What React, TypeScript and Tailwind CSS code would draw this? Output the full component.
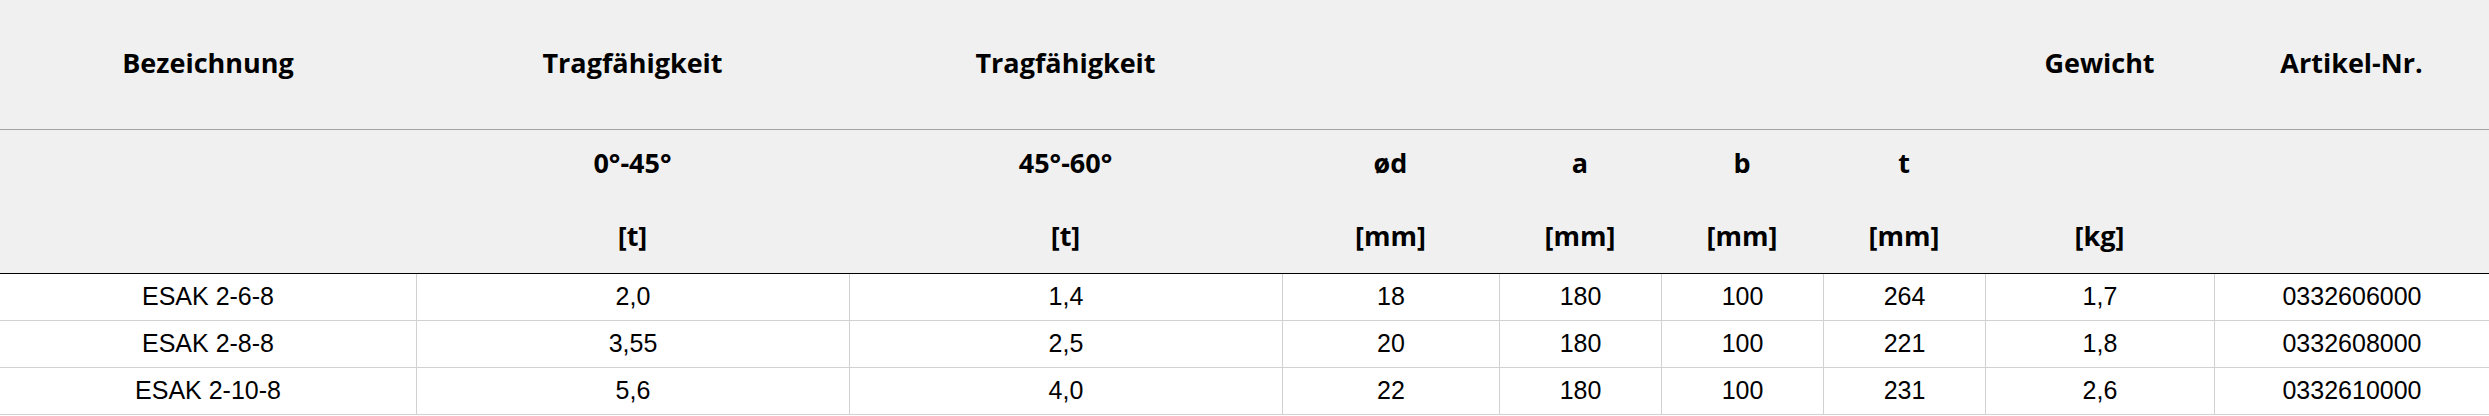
type Row = {
  name: string
  t45: string
  t60: string
  d: string
  a: string
  b: string
  t: string
  kg: string
  nr: string
}

const rows: Row[] = [
  { name: "ESAK 2-6-8", t45: "2,0", t60: "1,4", d: "18", a: "180", b: "100", t: "264", kg: "1,7", nr: "0332606000" },
  { name: "ESAK 2-8-8", t45: "3,55", t60: "2,5", d: "20", a: "180", b: "100", t: "221", kg: "1,8", nr: "0332608000" },
  { name: "ESAK 2-10-8", t45: "5,6", t60: "4,0", d: "22", a: "180", b: "100", t: "231", kg: "2,6", nr: "0332610000" },
]

// column widths taken from the original table
const grid = "grid grid-cols-[416px_433px_433px_217px_162px_162px_162px_229px_275px]"

const top = ["Bezeichnung", "Tragfähigkeit", "Tragfähigkeit", "", "", "", "", "Gewicht", "Artikel-Nr."]

const sub: [string, string][] = [
  ["", ""],
  ["0°-45°", "[t]"],
  ["45°-60°", "[t]"],
  ["ød", "[mm]"],
  ["a", "[mm]"],
  ["b", "[mm]"],
  ["t", "[mm]"],
  ["", "[kg]"],
  ["", ""],
]

export default function App() {
  return (
    <div className="w-[2489px] h-[416px] bg-white text-black">
      <div className="bg-[#f0f0f0] font-['Open_Sans',sans-serif] font-bold text-[27px]">
        <div className={`${grid} h-[130px] border-b border-[#a3a3a3]`}>
          {top.map((label, i) => (
            <div key={i} className="flex items-center justify-center pb-[2px]">
              {label}
            </div>
          ))}
        </div>
        <div className={`${grid} h-[144px] border-b border-black`}>
          {sub.map(([first, second], i) => (
            <div key={i} className="flex flex-col items-center pt-[15px] gap-[37px] leading-[36px]">
              <span>{first || "\u00a0"}</span>
              <span>{second || "\u00a0"}</span>
            </div>
          ))}
        </div>
      </div>

      <div className="font-['Liberation_Sans',Arial,sans-serif] text-[25px]">
        {rows.map((row) => {
          const cells = [row.name, row.t45, row.t60, row.d, row.a, row.b, row.t, row.kg, row.nr]
          return (
            <div key={row.nr} className={`${grid} h-[47px] border-b border-[#d2d2d2]`}>
              {cells.map((value, i) => (
                <div
                  key={i}
                  className={`flex items-center justify-center ${i > 0 ? "border-l border-[#d2d2d2]" : ""}`}
                >
                  {value}
                </div>
              ))}
            </div>
          )
        })}
      </div>
    </div>
  )
}
